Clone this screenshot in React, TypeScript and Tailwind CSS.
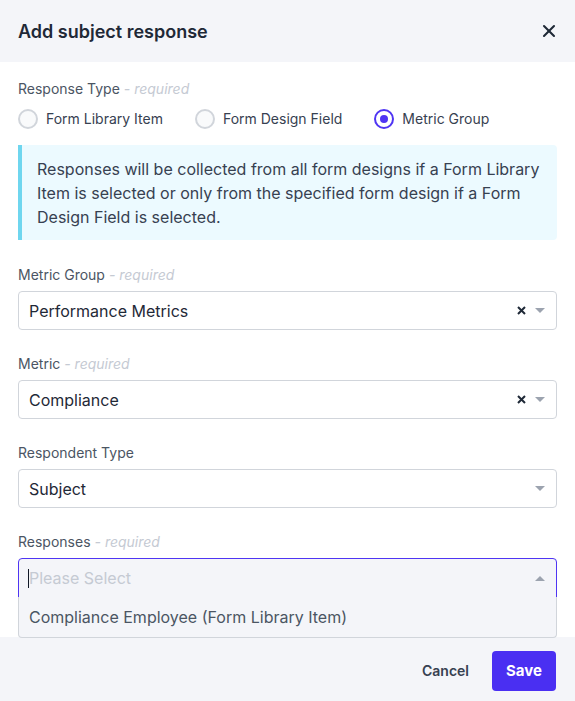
import { X } from "lucide-react"

function Label({ text, required }: { text: string; required?: boolean }) {
  return (
    <div className="text-sm text-[#4b5563] leading-5 pb-[6px]">
      {text}
      {required && <span className="italic text-[#c5cad3]"> - required</span>}
    </div>
  )
}

function Caret({ up }: { up?: boolean }) {
  return (
    <svg width="10" height="6" viewBox="0 0 10 6" className="text-[#9ca3af]">
      {up ? <path d="M0 6 L5 1 L10 6 Z" fill="currentColor" /> : <path d="M0 0 L5 5 L10 0 Z" fill="currentColor" />}
    </svg>
  )
}

function Select({ value, clearable }: { value: string; clearable?: boolean }) {
  return (
    <div className="h-[39px] rounded border border-[#d1d5db] bg-white flex items-center pl-[10px] pr-[11px]">
      <span className="flex-1 text-base text-[#1f2937]">{value}</span>
      {clearable && (
        <svg width="9" height="9" viewBox="0 0 9 9" className="mr-[9px]">
          <path d="M1 1 L8 8 M8 1 L1 8" stroke="#1f2937" strokeWidth="2" />
        </svg>
      )}
      <Caret />
    </div>
  )
}

function Radio({ label, checked }: { label: string; checked?: boolean }) {
  return (
    <label className="flex items-center gap-2 text-sm text-[#374151]">
      <span
        className={`w-5 h-5 rounded-full border-2 flex items-center justify-center ${
          checked ? "border-[#4f35f3] bg-white" : "border-[#d1d5db] bg-[#f9fafb]"
        }`}
      >
        {checked && <span className="w-2 h-2 rounded-full bg-[#4f35f3]" />}
      </span>
      {label}
    </label>
  )
}

export default function App() {
  return (
    <div className="w-[575px] h-[701px] bg-white flex flex-col font-['Inter',sans-serif]">
      <div className="h-[62px] bg-[#f4f5f9] flex items-center justify-between pl-[18px] pr-[16px] shrink-0">
        <h1 className="text-lg font-semibold text-[#1f2937] mt-[1px]">Add subject response</h1>
        <X size={20} strokeWidth={2.5} className="text-[#1f2937]" />
      </div>

      <div className="flex-1 px-[18px] pt-[17px]">
        <Label text="Response Type" required />
        <div className="flex gap-8 pt-[4px]">
          <Radio label="Form Library Item" />
          <Radio label="Form Design Field" />
          <Radio label="Metric Group" checked />
        </div>

        <div className="mt-[16px] h-[95px] border-l-4 border-[#6fd6ef] bg-[#ecfaff] rounded-r pl-[15px] pr-4 pt-[12px] text-base leading-6 text-[#374151]">
          Responses will be collected from all form designs if a Form Library Item is selected or only from the
          specified form design if a Form Design Field is selected.
        </div>

        <div className="mt-[25px]">
          <Label text="Metric Group" required />
          <Select value="Performance Metrics" clearable />
        </div>

        <div className="mt-[24px]">
          <Label text="Metric" required />
          <Select value="Compliance" clearable />
        </div>

        <div className="mt-[24px]">
          <Label text="Respondent Type" />
          <Select value="Subject" />
        </div>

        <div className="mt-[24px] relative">
          <Label text="Responses" required />
          <div className="h-[40px] rounded-t border border-[#4f35f3] bg-[#f4f5f9] flex items-center pl-[9px] pr-[11px]">
            <span className="w-px h-[19px] bg-[#111827]" />
            <span className="flex-1 text-base text-[#c5cad3]">Please Select</span>
            <Caret up />
          </div>
          <div className="absolute left-0 right-0 top-[99%] z-10 h-[41px] border border-t-0 border-[#d1d5db] rounded-b bg-[#f4f5f9] flex items-center pl-[10px] text-base text-[#4b5563]">
            Compliance Employee (Form Library Item)
          </div>
        </div>
      </div>

      <div className="h-[64px] bg-[#f4f5f9] flex items-start justify-end gap-[23px] pt-[14px] pr-[19px] shrink-0">
        <button className="h-[40px] text-sm font-semibold text-[#374151]">Cancel</button>
        <button className="w-[64px] h-[40px] rounded bg-[#4a2ff2] text-white text-[15px] font-bold">Save</button>
      </div>
    </div>
  )
}
